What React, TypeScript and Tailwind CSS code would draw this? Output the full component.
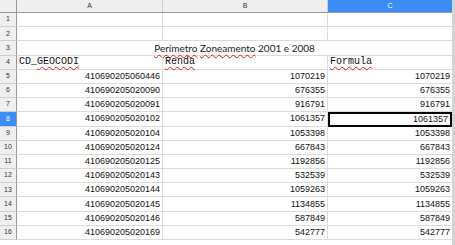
import React from 'react';

const rows: [string, string][] = [
  ['410690205060446', '1070219'],
  ['410690205020090', '676355'],
  ['410690205020091', '916791'],
  ['410690205020102', '1061357'],
  ['410690205020104', '1053398'],
  ['410690205020124', '667843'],
  ['410690205020125', '1192856'],
  ['410690205020143', '532539'],
  ['410690205020144', '1059263'],
  ['410690205020145', '1134855'],
  ['410690205020146', '587849'],
  ['410690205020169', '542777'],
];

const wavy = 'underline decoration-wavy decoration-[#e02020] decoration-1 underline-offset-2';

const RowHead = ({ n, active }: { n: number; active?: boolean }) => (
  <div
    className={
      'w-[17px] shrink-0 flex items-center justify-center text-[7px] border-r border-[#9a9a9a] border-b border-b-[#cfcfcf] ' +
      (active ? 'bg-[#3b8df5] text-white' : 'bg-[#efefef] text-[#333]')
    }
  >
    {n}
  </div>
);

const Row = ({ children }: { children: React.ReactNode }) => (
  <div className="flex h-[14.2px]">{children}</div>
);

export default function App() {
  return (
    <div
      className="w-[455px] h-[245px] overflow-hidden bg-white flex text-[#111]"
      style={{ fontFamily: '"Liberation Sans", Arial, sans-serif' }}
    >
      <div className="w-[452px] flex flex-col">
        {/* column headers */}
        <div className="flex h-[13px] text-[7px] border-b border-[#9a9a9a]">
          <div className="w-[17px] shrink-0 bg-[#efefef] border-r border-[#9a9a9a]" />
          <div className="w-[146px] shrink-0 bg-[#efefef] border-r border-[#cfcfcf] flex items-center justify-center text-[#333]">A</div>
          <div className="w-[165px] shrink-0 bg-[#efefef] border-r border-[#cfcfcf] flex items-center justify-center text-[#333]">B</div>
          <div className="flex-1 bg-[#3b8df5] flex items-center justify-center text-white">C</div>
        </div>

        <Row>
          <RowHead n={1} />
          <div className="w-[146px] border-r border-b border-[#dcdcdc]" />
          <div className="w-[165px] border-r border-b border-[#dcdcdc]" />
          <div className="flex-1 border-b border-[#dcdcdc]" />
        </Row>
        <Row>
          <RowHead n={2} />
          <div className="w-[146px] border-r border-b border-[#dcdcdc]" />
          <div className="w-[165px] border-r border-b border-[#dcdcdc]" />
          <div className="flex-1 border-b border-[#dcdcdc]" />
        </Row>
        <Row>
          <RowHead n={3} />
          <div
            className="flex-1 border-b border-[#dcdcdc] flex items-center justify-center text-[10px] leading-none text-[#222]"
            style={{ fontFamily: 'Lato, "Noto Sans", sans-serif' }}
          >
            <span>
              <span className={wavy}>Perímetro</span> <span className={wavy}>Zoneamento</span> 2001 e 2008
            </span>
          </div>
        </Row>
        <Row>
          <RowHead n={4} />
          <div
            className="w-[146px] border-r border-b border-[#dcdcdc] flex items-center px-[2px] text-[10px] leading-none"
            style={{ fontFamily: '"Liberation Mono", monospace' }}
          >
            CD_<span className={wavy}>GEOCODI</span>
          </div>
          <div
            className="w-[165px] border-r border-b border-[#dcdcdc] flex items-center px-[2px] text-[10px] leading-none"
            style={{ fontFamily: '"Liberation Mono", monospace' }}
          >
            <span className={wavy}>Renda</span>
          </div>
          <div
            className="flex-1 border-b border-[#dcdcdc] flex items-center px-[2px] text-[10px] leading-none"
            style={{ fontFamily: '"Liberation Mono", monospace' }}
          >
            <span className={wavy}>Formula</span>
          </div>
        </Row>

        {rows.map(([geo, renda], i) => {
          const n = i + 5;
          const sel = n === 8;
          return (
            <Row key={n}>
              <RowHead n={n} active={sel} />
              <div className="w-[146px] border-r border-b border-[#dcdcdc] flex items-center justify-end px-[2px] text-[9px] leading-none">
                {geo}
              </div>
              <div className="w-[165px] border-r border-b border-[#dcdcdc] flex items-center justify-end px-[2px] text-[9px] leading-none">
                {renda}
              </div>
              <div
                className={
                  'flex-1 flex items-center justify-end px-[2px] text-[9px] leading-none ' +
                  (sel ? 'border-2 border-black' : 'border-b border-[#dcdcdc]')
                }
              >
                {renda}
              </div>
            </Row>
          );
        })}
      </div>
      <div className="w-[3px] bg-[#d4d4d4]" />
    </div>
  );
}
